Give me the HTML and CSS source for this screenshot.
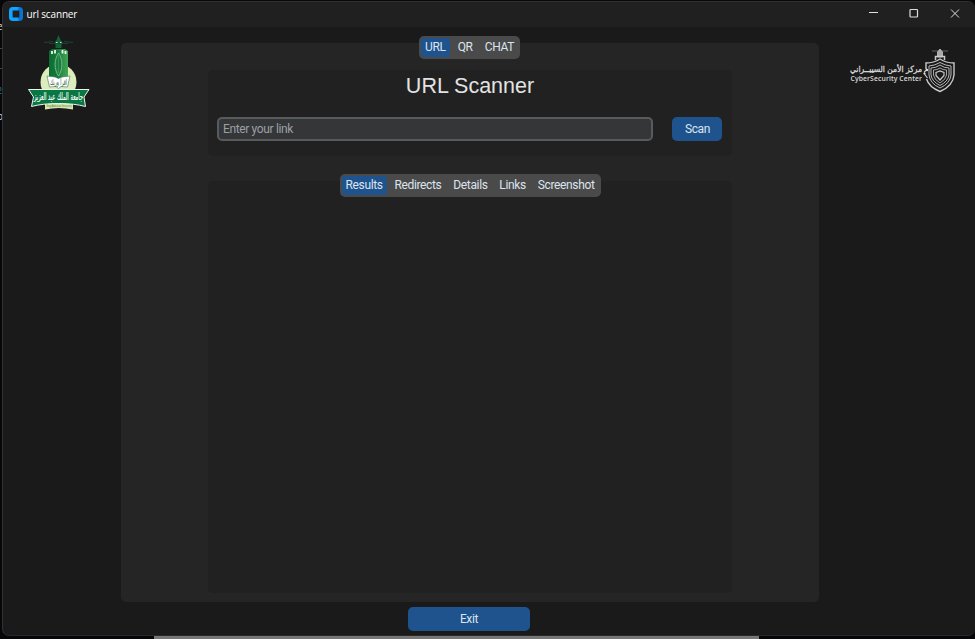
FILE: index.html
```html
<!DOCTYPE html>
<html lang="en">
<head>
<meta charset="utf-8">
<title>url scanner</title>
<link rel="stylesheet" href="styles.css">
</head>
<body>
<div class="backdrop" aria-hidden="true">
  <span class="peek peek-e">e</span>
  <span class="peek-line line-a"></span>
  <span class="peek-line line-b"></span>
  <span class="peek peek-2">2</span>
  <span class="peek peek-o">o</span>
  <span class="peek-bar"></span>
</div>
<div class="window">
  <header class="titlebar">
    <svg class="app-icon" width="14" height="14" viewBox="0 0 14 14">
      <defs><linearGradient id="ring" x1="0" y1="0" x2="1" y2="0"><stop offset=".6" stop-color="#0fa4ff"/><stop offset=".85" stop-color="#0873d2"/></linearGradient></defs>
      <rect x="1.800" y="1.800" width="10.400" height="10.400" rx="2" fill="none" stroke="url(#ring)" stroke-width="3.600"/>
    </svg>
    <span class="title">url scanner</span>
    <svg class="controls" width="100" height="14" viewBox="0 0 100 14" fill="none" stroke="#dedede">
      <path d="M4 5.500h9"/>
      <rect x="45" y="2.500" width="7.500" height="7.500" rx=".8" stroke-width="1.200"/>
      <path d="M86 2.500l8 8M94 2.500l-8 8"/>
    </svg>
  </header>
  <main class="content">
    <aside class="left">
      <svg class="kau" width="62" height="76" viewBox="28 35 62 76">
        <defs><linearGradient id="tower" x1="0" y1="0" x2="1" y2="0"><stop offset="0" stop-color="#0d6b32"/><stop offset=".4" stop-color="#127a3a"/><stop offset="1" stop-color="#45a556"/></linearGradient></defs>
        <circle cx="58.500" cy="82" r="18" fill="#dcecbc"/>
        <path d="M45 100h28v9.500q-14-3-28 0z" fill="#d5e8ae"/>
        <path d="M49 51l3-2h13l3 2v28H49z" fill="url(#tower)"/>
        <path d="M55.500 48v-3l-1-3 2-2 2-5 2 5 2 2-1 3v3z" fill="#17613a"/>
        <path d="M44 42.500l9-1M73 42.500l-9-1M49 43.500h19" fill="none" stroke="#1b4a35" stroke-width=".9"/>
        <path d="M56 42.500h1.500M60 42.500h1.500" stroke="#bde4cd"/>
        <path d="M52 51v3M55 50v3.500M62.500 50v3.500M65.500 51v3" stroke="#eff7ed" stroke-width="1.800"/>
        <path d="M58.500 53c-4.500 7-4.500 16 0 23 4.500-7 4.500-16 0-23z" fill="#187d40" stroke="#8bc498" stroke-width=".8"/>
        <path d="M58.500 55v18" stroke="#4ba063" stroke-width=".6"/>
        <path d="M47 76l8 1 3.500 1.500L62 77l8-1-2.500 11-6.500-.5-2.500 2-2.500-2-6.500.5z" fill="#fff" stroke="#3c7650" stroke-width=".6"/>
        <text class="arabic" x="58.500" y="84.500" text-anchor="middle" font-size="8" textLength="17" lengthAdjust="spacingAndGlyphs" fill="#245339">اقرأ وربك</text>
        <path d="M28.500 89.500h60.500l-5 7.500 1.500 9.500q-11-3-27-3t-27 3l2-9.500z" fill="#087743" stroke="#eff7ed"/>
        <text class="arabic" x="58.500" y="100" text-anchor="middle" font-size="10" textLength="49" lengthAdjust="spacingAndGlyphs" fill="#fff" stroke="#fff" stroke-width=".2">جامعة الملك عبد العزيز</text>
        <text class="latin" x="59" y="107" text-anchor="middle" font-size="3" textLength="25" lengthAdjust="spacingAndGlyphs" fill="#426537">King Abdulaziz University</text>
      </svg>
    </aside>
    <div class="center">
      <section class="panel">
        <nav class="tabs main-tabs"><button class="on">URL</button><button>QR</button><button>CHAT</button></nav>
        <div class="card scan-card">
          <h1>URL Scanner</h1>
          <div class="form"><input type="text" placeholder="Enter your link"><button class="btn scan">Scan</button></div>
        </div>
        <div class="card results">
          <nav class="tabs result-tabs"><button class="on">Results</button><button>Redirects</button><button>Details</button><button>Links</button><button>Screenshot</button></nav>
        </div>
      </section>
      <button class="btn exit">Exit</button>
    </div>
    <aside class="right">
      <svg class="csc" width="108" height="46" viewBox="849 48 108 46">
        <text class="arabic" x="886" y="72.200" text-anchor="middle" font-size="8.500" textLength="72" lengthAdjust="spacingAndGlyphs" fill="#dadada" stroke="#dadada" stroke-width=".3">مركز الأمن السيبــراني</text>
        <text class="latin semi" x="850.500" y="81" font-size="6.800" textLength="71.500" lengthAdjust="spacing" fill="#dadada">CyberSecurity Center</text>
        <g fill="none" stroke="#c9c9c9">
          <path d="M932 51h6M942 51h6" stroke="#777" stroke-width=".8"/>
          <path d="M937.500 57v-5l2.500-3 2.500 3v5z" fill="#aaa" stroke-width=".8"/>
          <path d="M935.500 60v-3.500h9V60" stroke-width="1.500"/>
          <path d="M926 69v-6q8 0 14-4 6 4 14 4v12q-1 11-14 16.500-11-4.500-13.500-12.500" stroke-width="1.400"/>
          <path d="M940 62.500q-5 3-11 3.500v9q1 8.500 11 13 10-4.500 11-13v-9q-6-.5-11-3.500z" stroke-width=".9"/>
          <path d="M931 68q5 0 9-3 4 3 9 3v7q-1 6.500-9 10.500-8-4-9-10.500z" stroke-width=".9"/>
          <path d="M933.500 70q3.500 0 6.500-2 3 2 6.500 2v5q-1 5-6.500 8-5.500-3-6.500-8z" stroke-width=".8"/>
          <path d="M936 72.500l4-1.500 4 1.500v3l-4 4.500-4-4.500z" stroke-width="1.200"/>
          <path d="M927 69l-3 3.500M924.500 74l3 4" stroke-width="1.200"/>
        </g>
        <circle cx="927" cy="70" r="1.200" fill="#ddd"/>
        <circle cx="924.500" cy="73.500" r="1.100" fill="#ddd"/>
      </svg>
    </aside>
  </main>
</div>
</body>
</html>
```

FILE: styles.css
```css
* { box-sizing: border-box; }

body {
  margin: 0;
  width: 975px;
  height: 639px;
  padding: 1px 0 0 2px;
  overflow: hidden;
  background: #070709;
  font-family: Roboto, "Liberation Sans", sans-serif;
  color: #dce4ee;
}

.backdrop {
  position: absolute;
  inset: 0;
  font: 10px "Open Sans", sans-serif;
}
.peek { position: absolute; left: -3px; line-height: 12px; color: #ddd; }
.peek-e { top: 20px; }
.peek-2 { top: 85px; font-size: 9px; color: #2978b7; }
.peek-o { top: 110px; }
.peek-line { position: absolute; left: 0; width: 2px; height: 1px; background: #44464a; }
.line-a { top: 48px; }
.line-b { top: 68px; }
.peek-bar { position: absolute; left: 154px; top: 636px; width: 605px; height: 3px; background: #777; }

.window {
  position: relative;
  display: flex;
  flex-direction: column;
  width: 973px;
  height: 635px;
  overflow: hidden;
  border: 1px solid #303030;
  border-right: 0;
  border-radius: 7px;
  border-bottom-color: #282828;
  background: #1a1a1a;
}

.titlebar {
  display: flex;
  flex: 0 0 25px;
  align-items: center;
  padding: 0 10px 1px 6px;
  background: #202020;
}
.title {
  margin-left: 3.5px;
  font: 10px/14px "Open Sans", sans-serif;
  letter-spacing: -.15px;
  color: #fff;
}
.controls { margin-left: auto; }

.content {
  display: grid;
  flex: 1;
  grid-template-columns: 118px 698px 1fr;
}
.left { padding: 8px 0 0 25px; }
.right { padding: 21px 0 0 30px; }
.kau, .csc { display: block; }

.center {
  display: flex;
  flex-direction: column;
  align-items: center;
  padding-top: 16px;
}
.panel {
  display: flex;
  flex-direction: column;
  align-items: center;
  width: 698px;
  height: 559px;
  border-radius: 5px;
  background: #252525;
}

button {
  border: 0;
  font: 12px/16px Roboto, sans-serif;
  letter-spacing: -.35px;
  color: #dce4ee;
}
.tabs {
  display: flex;
  justify-content: space-between;
  flex: none;
  height: 23px;
  padding: 2px;
  border-radius: 5px;
  background: #4a4a4a;
}
.tabs button {
  padding: 0 4px 1px;
  border-radius: 3px;
  background: transparent;
}
.tabs .on { background: #1f538d; }
.main-tabs { width: 101px; margin: -7px 1px 0 0; }
.result-tabs { width: 261px; margin: -7px 0 0 0; }

.card {
  width: 524px;
  border-radius: 5px;
  background: #212121;
}
.scan-card { height: 86px; margin-top: 11px; }
h1 {
  margin: 0;
  padding: 3px 0 0;
  font: 400 21.5px/27px "Liberation Sans", sans-serif;
  text-align: center;
  color: #e3e3e3;
}
.form {
  display: flex;
  justify-content: space-between;
  padding: 17px 10px 0 9px;
}
input {
  width: 436px;
  height: 24px;
  padding: 0 4px 1px;
  border: 2px solid #565b5e;
  border-radius: 5px;
  background: #343638;
  color: #dce4ee;
  font: 12px/16px Roboto, sans-serif;
  letter-spacing: -.36px;
}
input::placeholder { color: #9ba0a5; }
.btn { border-radius: 5px; background: #1f538d; }
.scan { width: 50px; height: 24px; padding: 0 0 0 1px; }
.results {
  display: flex;
  justify-content: center;
  align-items: flex-start;
  height: 412px;
  margin-top: 25px;
}
.exit { width: 122px; height: 24px; margin: 5px 2px 0 0; }

.arabic { font-family: "DejaVu Sans", sans-serif; }
.latin { font-family: "Open Sans", sans-serif; }
.semi { font-weight: 600; }
```
